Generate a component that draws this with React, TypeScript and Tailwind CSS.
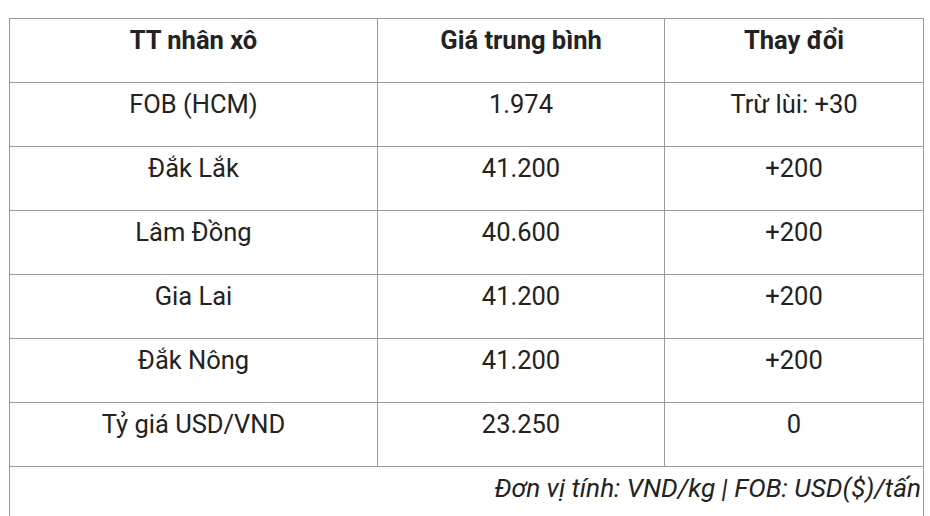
const rows = [
  ['FOB (HCM)', '1.974', 'Trừ lùi: +30'],
  ['Đắk Lắk', '41.200', '+200'],
  ['Lâm Đồng', '40.600', '+200'],
  ['Gia Lai', '41.200', '+200'],
  ['Đắk Nông', '41.200', '+200'],
  ['Tỷ giá USD/VND', '23.250', '0'],
]

export default function App() {
  return (
    <div className="min-h-screen bg-white pt-[18px] pl-[9px] text-[#222] font-['Roboto',sans-serif]">
      <div className="w-[915px] border-l border-t border-[#9a9a9a] text-[25.5px] leading-[30px]">
        {/* Header */}
        <div className="grid grid-cols-[368px_287px_259px] font-bold">
          <div className="h-16 border-r border-b border-[#9a9a9a] pt-[6px] text-center">TT nhân xô</div>
          <div className="h-16 border-r border-b border-[#9a9a9a] pt-[6px] text-center">Giá trung bình</div>
          <div className="h-16 border-r border-b border-[#9a9a9a] pt-[6px] text-center">Thay đổi</div>
        </div>

        {/* Body */}
        {rows.map((r) => (
          <div key={r[0]} className="grid grid-cols-[368px_287px_259px]">
            {r.map((c, i) => (
              <div key={i} className="h-16 border-r border-b border-[#9a9a9a] pt-[6px] text-center">
                {c}
              </div>
            ))}
          </div>
        ))}

        {/* Footer note */}
        <div className="h-16 border-r border-b border-[#9a9a9a] pt-[6px] pr-[2px] text-right text-[26.2px] italic">
          Đơn vị tính: VND/kg | FOB: USD($)/tấn
        </div>
      </div>
    </div>
  )
}
